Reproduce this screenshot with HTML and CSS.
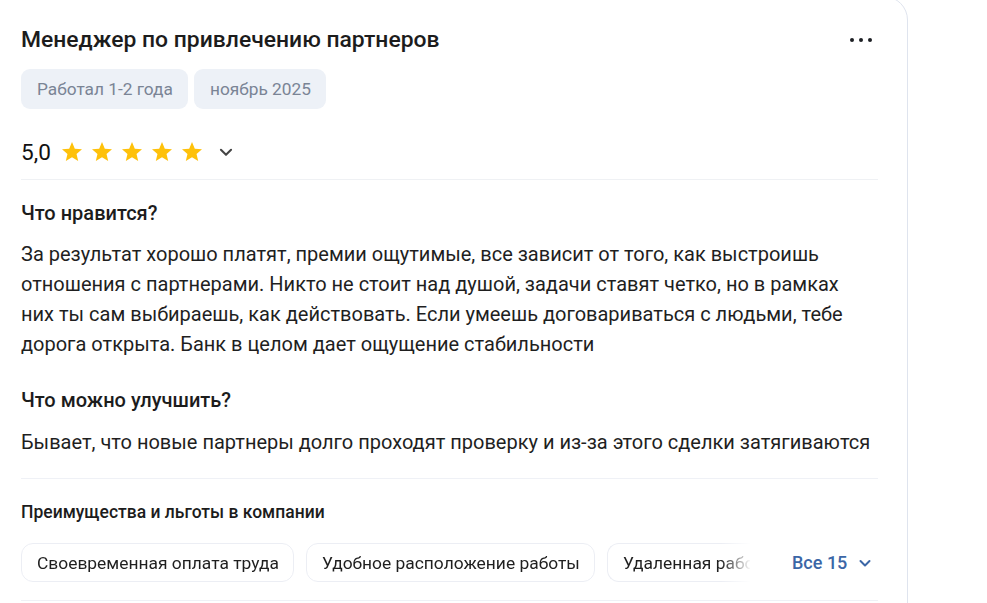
FILE: index.html
```html
<!DOCTYPE html>
<html lang="ru">
<head>
<meta charset="utf-8">
<title>Отзыв</title>
<link rel="stylesheet" href="styles.css">
</head>
<body>
<div class="card">
  <div class="head">
    <h2 class="title">Менеджер по привлечению партнеров</h2>
    <button class="more" aria-label="Ещё"><span></span><span></span><span></span></button>
  </div>
  <div class="tags">
    <span class="tag">Работал 1-2 года</span>
    <span class="tag">ноябрь 2025</span>
  </div>
  <div class="rating">
    <span class="score">5,0</span>
    <span class="stars">
      <svg viewBox="0 0 24 24"><path d="M12 17.27L18.18 21l-1.64-7.03L22 9.24l-7.19-.61L12 2 9.19 8.63 2 9.24l5.46 4.73L5.82 21z"/></svg>
      <svg viewBox="0 0 24 24"><path d="M12 17.27L18.18 21l-1.64-7.03L22 9.24l-7.19-.61L12 2 9.19 8.63 2 9.24l5.46 4.73L5.82 21z"/></svg>
      <svg viewBox="0 0 24 24"><path d="M12 17.27L18.18 21l-1.64-7.03L22 9.24l-7.19-.61L12 2 9.19 8.63 2 9.24l5.46 4.73L5.82 21z"/></svg>
      <svg viewBox="0 0 24 24"><path d="M12 17.27L18.18 21l-1.64-7.03L22 9.24l-7.19-.61L12 2 9.19 8.63 2 9.24l5.46 4.73L5.82 21z"/></svg>
      <svg viewBox="0 0 24 24"><path d="M12 17.27L18.18 21l-1.64-7.03L22 9.24l-7.19-.61L12 2 9.19 8.63 2 9.24l5.46 4.73L5.82 21z"/></svg>
    </span>
    <svg class="chev" viewBox="0 0 16 16"><path d="M3.5 6l4.5 4.5L12.5 6"/></svg>
  </div>
  <div class="section">
    <h3 class="sec-title">Что нравится?</h3>
    <p class="text">За результат хорошо платят, премии ощутимые, все зависит от того, как выстроишь отношения с партнерами. Никто не стоит над душой, задачи ставят четко, но в рамках них ты сам выбираешь, как действовать. Если умеешь договариваться с людьми, тебе дорога открыта. Банк в целом дает ощущение стабильности</p>
    <h3 class="sec-title second">Что можно улучшить?</h3>
    <p class="text">Бывает, что новые партнеры долго проходят проверку и из-за этого сделки затягиваются</p>
  </div>
  <div class="benefits">
    <h4 class="ben-title">Преимущества и льготы в компании</h4>
    <div class="ben-row">
      <div class="ben-list">
        <span class="ben">Своевременная оплата труда</span>
        <span class="ben">Удобное расположение работы</span>
        <span class="ben ben-last">Удаленная работа</span>
      </div>
      <button class="all">Все 15 <svg viewBox="0 0 16 16"><path d="M3.5 6l4.5 4.5L12.5 6"/></svg></button>
    </div>
  </div>
</div>
</body>
</html>
```

FILE: styles.css
```css
* { box-sizing: border-box; }
html, body {
  margin: 0;
  padding: 0;
  background: #fff;
  overflow: hidden;
  height: 603px;
}
body {
  font-family: Roboto, "Noto Sans", "Liberation Sans", sans-serif;
  color: #1f1f1f;
}
.card {
  width: 912px;
  margin: -4px 0 0 -4px;
  padding: 29px 29px 0 24px;
  border: 1px solid #dfe4ee;
  border-radius: 0 24px 0 0;
  height: 620px;
}
.head {
  display: flex;
  align-items: center;
  justify-content: space-between;
  height: 28px;
}
.title {
  margin: 0;
  font-size: 22.9px;
  font-weight: 500;
  line-height: 28px;
  color: #1c1c1c;
}
.more {
  display: flex;
  gap: 4.5px;
  background: none;
  border: 0;
  padding: 0;
  margin-right: 6px;
  cursor: pointer;
}
.more span {
  width: 4.5px;
  height: 4.5px;
  border-radius: 50%;
  background: #1d1f24;
}
.tags {
  display: flex;
  gap: 6px;
  margin-top: 15px;
}
.tag {
  display: inline-flex;
  align-items: center;
  height: 40px;
  padding: 0 15px 0 16px;
  border-radius: 9px;
  background: #edf1f7;
  color: #7a8495;
  font-size: 17.3px;
}
.rating {
  display: flex;
  align-items: center;
  height: 32px;
  margin-top: 27px;
}
.score {
  font-size: 22.6px;
  font-weight: 400;
  color: #111;
  margin-right: 9px;
}
.stars {
  display: flex;
  gap: 6px;
}
.stars svg {
  width: 24px;
  height: 24px;
  fill: #fec10b;
}
.chev {
  width: 18px;
  height: 18px;
  margin-left: 13px;
  fill: none;
  stroke: #444;
  stroke-width: 1.8;
  stroke-linecap: round;
  stroke-linejoin: round;
}
.section {
  margin-top: 11px;
  border-top: 1px solid #eff1f4;
  padding-top: 19px;
  padding-bottom: 21px;
}
.sec-title {
  margin: 0;
  font-size: 20px;
  font-weight: 500;
  line-height: 28px;
  color: #1c1c1c;
}
.sec-title.second {
  margin-top: 27px;
}
.text {
  margin: 12px 0 0;
  max-width: 853px;
  font-size: 20px;
  line-height: 30px;
  color: #1f1f1f;
}
.section .second + .text {
  margin-top: 13px;
}
.benefits {
  border-top: 1px solid #eff1f6;
  border-bottom: 1px solid #eff1f6;
  padding: 21px 0 18px;
}
.ben-title {
  margin: 0;
  font-size: 17.5px;
  font-weight: 500;
  line-height: 24px;
  color: #1c1c1c;
}
.ben-row {
  display: flex;
  align-items: center;
  margin-top: 19px;
}
.ben-list {
  width: 730px;
  display: flex;
  gap: 12px;
  overflow: hidden;
  -webkit-mask-image: linear-gradient(to right, #000 700px, transparent 730px);
  mask-image: linear-gradient(to right, #000 700px, transparent 730px);
}
.ben {
  flex: none;
  display: inline-flex;
  align-items: center;
  height: 39px;
  padding: 0 14px 0 15px;
  border: 1px solid #eceef4;
  border-radius: 12px;
  font-size: 17.4px;
  color: #1f1f1f;
  white-space: nowrap;
}
.ben-last {
  flex: 0 1 auto;
  min-width: 0;
  overflow: hidden;
  border-right-color: transparent;
  border-radius: 12px 0 0 12px;
}
.all {
  display: flex;
  align-items: center;
  gap: 10px;
  margin-left: 41px;
  padding: 0;
  border: 0;
  background: none;
  font-family: inherit;
  font-size: 18px;
  font-weight: 500;
  color: #3b66a6;
  cursor: pointer;
}
.all svg {
  width: 16px;
  height: 16px;
  fill: none;
  stroke: #3b66a6;
  stroke-width: 2;
  stroke-linecap: round;
  stroke-linejoin: round;
}
```
